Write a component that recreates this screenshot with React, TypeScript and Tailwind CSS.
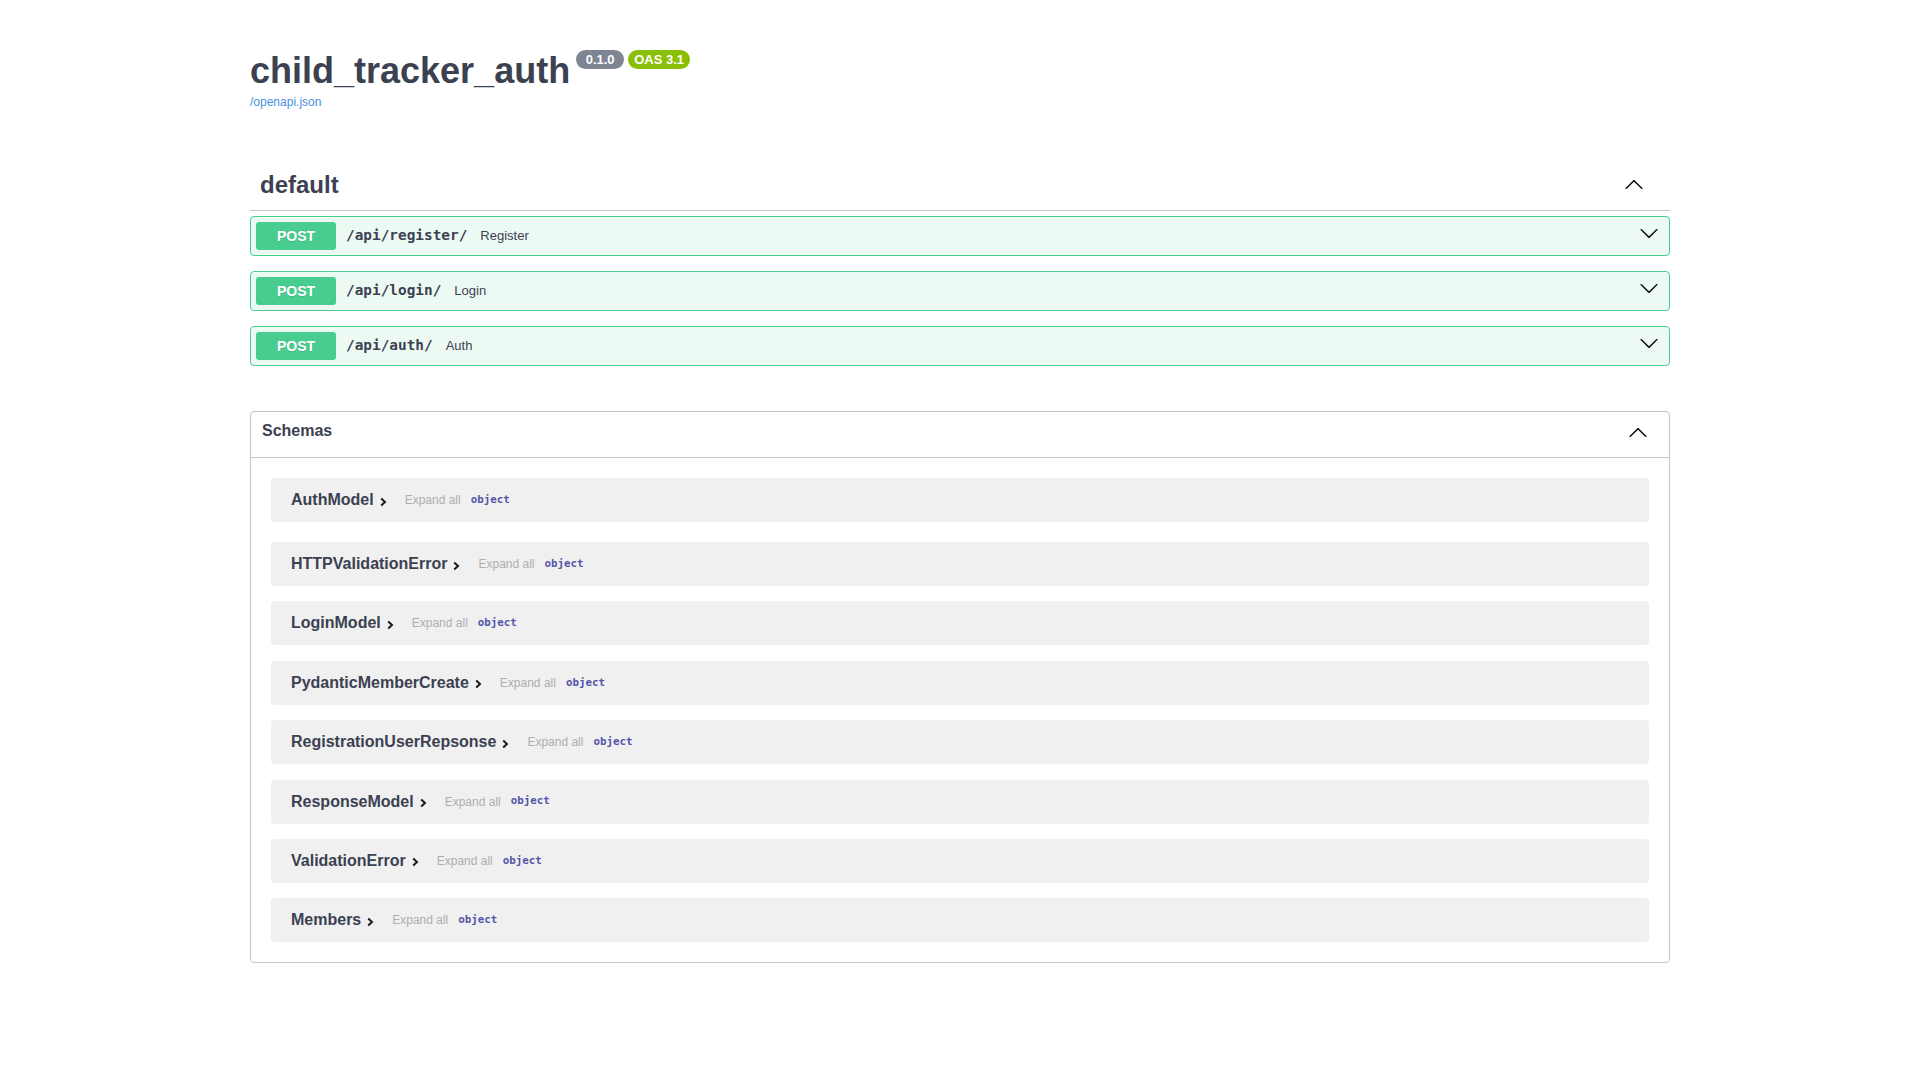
import React from 'react';

const arrowPath =
  'M17.418 6.109c.272-.268.709-.268.979 0s.271.701 0 .969l-7.908 7.83c-.27.268-.707.268-.979 0l-7.908-7.83c-.27-.268-.27-.701 0-.969.271-.268.709-.268.979 0L10 13.25l7.418-7.141z';

function Arrow({ up = false, className = '' }: { up?: boolean; className?: string }) {
  return (
    <svg
      width="20"
      height="20"
      viewBox="0 0 20 20"
      className={`${up ? 'rotate-180' : ''} shrink-0 text-[#111] ${className}`}
      aria-hidden="true"
    >
      <path d={arrowPath} fill="currentColor" />
    </svg>
  );
}

const endpoints = [
  { path: '/api/register/', summary: 'Register' },
  { path: '/api/login/', summary: 'Login' },
  { path: '/api/auth/', summary: 'Auth' },
];

const schemas = [
  'AuthModel',
  'HTTPValidationError',
  'LoginModel',
  'PydanticMemberCreate',
  'RegistrationUserRepsonse',
  'ResponseModel',
  'ValidationError',
  'Members',
];

function Operation({ path, summary }: { path: string; summary: string }) {
  return (
    <div className="flex h-[40px] items-start rounded-[4px] border border-[#49cc90] bg-[#edfaf4] p-[5px]">
      <span className="flex h-[28px] w-[80px] shrink-0 items-center justify-center rounded-[3px] bg-[#49cc90] text-[14px] font-bold text-white [text-shadow:0_1px_0_rgba(0,0,0,0.1)]">
        POST
      </span>
      <div className="flex h-[28px] flex-1 items-center">
        <span className="ml-[10px] font-['DejaVu_Sans_Mono',monospace] text-[14.4px] font-bold text-[#3b4151]">
          {path}
        </span>
        <span className="ml-[13px] text-[13px] text-[#3b4151]">{summary}</span>
      </div>
      <Arrow className="mr-[5px] mt-px" />
    </div>
  );
}

function SchemaRow({ name, first }: { name: string; first: boolean }) {
  return (
    <div
      className={`mx-5 flex h-[44px] items-center rounded-[4px] bg-[#f0f0f0] pl-5 ${first ? 'mb-5' : 'mb-[15.4px] last:mb-0'}`}
    >
      <span className="text-[16px] font-bold text-[#3b4151]">{name}</span>
      <svg width="7" height="10" viewBox="0 0 7 10" className="ml-[6px] mt-[3px] shrink-0" aria-hidden="true">
        <polyline points="1.2,1.5 5,5 1.2,8.5" fill="none" stroke="#1b1b1b" strokeWidth="2" />
      </svg>
      <span className="ml-[18px] text-[12px] text-[#afaeae]">Expand all</span>
      <span className="ml-[10px] font-['DejaVu_Sans_Mono',monospace] text-[10.8px] font-bold text-[#55a]">object</span>
    </div>
  );
}

export default function App() {
  return (
    <div className="min-h-screen bg-white font-['Liberation_Sans',Arial,sans-serif] text-[#3b4151]">
      <div className="mx-auto max-w-[1460px] px-5 pb-10 pt-[53px]">
        {/* info */}
        <div className="flex items-start">
          <h2 className="text-[36px] font-bold leading-[36px] text-[#3b4151]">child_tracker_auth</h2>
          <span className="-mt-[3px] ml-[6px] flex h-[19px] w-[48px] items-center justify-center rounded-full bg-[#7d8492] text-[13px] font-bold text-white">
            0.1.0
          </span>
          <span className="-mt-[3px] ml-[4px] flex h-[19px] w-[62px] items-center justify-center rounded-full bg-[#89bf04] text-[13px] font-bold text-white">
            OAS 3.1
          </span>
        </div>
        <a className="mt-[6px] block w-fit text-[12px] leading-[14px] text-[#4990e2]" href="#">
          /openapi.json
        </a>

        {/* default tag */}
        <div className="mt-[64px] flex items-center justify-between border-b border-[#c4c6cb] pb-[13px] pl-[10px] pr-[26px]">
          <h3 className="text-[24px] font-bold leading-6 text-[#3b4151]">default</h3>
          <Arrow up />
        </div>
        <div className="mt-[5px] flex flex-col gap-[15px]">
          {endpoints.map((e) => (
            <Operation key={e.path} path={e.path} summary={e.summary} />
          ))}
        </div>

        {/* schemas */}
        <section className="mt-[45px] rounded-[4px] border border-[#c4c6cb]">
          <div className="flex h-[46px] items-start justify-between border-b border-[#c4c6cb] pl-[11px] pr-[21px]">
            <h4 className="pt-[9px] text-[16px] font-bold leading-5 text-[#3b4151]">Schemas</h4>
            <Arrow up className="mt-[11px]" />
          </div>
          <div className="pb-5 pt-5">
            {schemas.map((s, i) => (
              <SchemaRow key={s} name={s} first={i === 0} />
            ))}
          </div>
        </section>
      </div>
    </div>
  );
}
